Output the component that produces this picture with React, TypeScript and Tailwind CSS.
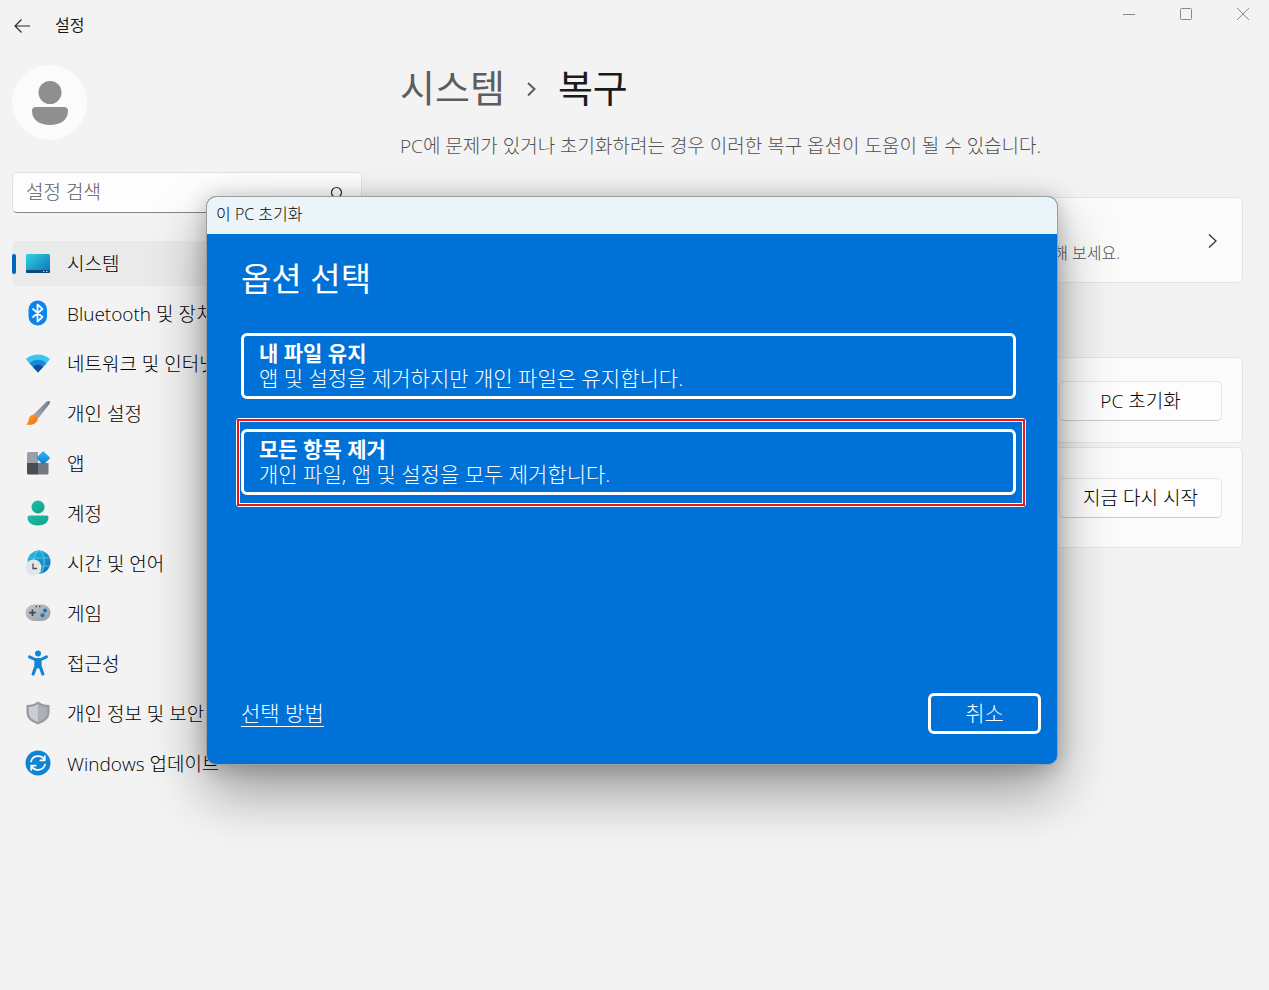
import React, { useState } from 'react';

type NavItem = { id: string; label: string; icon: React.ReactNode };

const SystemIcon = () => (
  <svg width="26" height="26" viewBox="0 0 26 26">
    <defs>
      <linearGradient id="sys" x1="0" y1="0" x2="1" y2="1">
        <stop offset="0" stopColor="#32d3dd" />
        <stop offset="1" stopColor="#0b6ebd" />
      </linearGradient>
    </defs>
    <rect x="1" y="4" width="24" height="19" rx="1.500" fill="url(#sys)" />
    <path d="M1 20h24v1.500a1.500 1.500 0 0 1-1.500 1.500h-21A1.500 1.500 0 0 1 1 21.500z" fill="#0c4a78" />
    <path d="M18 21h1.500v1H18zM21 21h1.500v1H21z" fill="#9fd8f5" />
  </svg>
);

const BluetoothIcon = () => (
  <svg width="26" height="26" viewBox="0 0 26 26">
    <rect x="3.500" y="0.500" width="18.500" height="25" rx="9" fill="#0a84f0" />
    <path d="M8 9l9.500 8-5 4.500v-17l5 4.500L8 17" fill="none" stroke="#fff" strokeWidth="1.700" strokeLinejoin="round" strokeLinecap="round" />
  </svg>
);

const NetworkIcon = () => (
  <svg width="26" height="26" viewBox="0 0 26 26">
    <path d="M0.800 9.200C7.500 3 18 3 25 9.200L13 22.500z" fill="#39c6f1" />
    <path d="M4.500 13.200c5-4.600 12-4.600 17 0L13 22.500z" fill="#1889d6" />
    <path d="M8 17c3-2.900 7-2.900 10 0l-5 5.500z" fill="#0c529c" />
  </svg>
);

const BrushIcon = () => (
  <svg width="26" height="26" viewBox="0 0 26 26">
    <defs>
      <linearGradient id="brush" x1="1" y1="0" x2="0" y2="1">
        <stop offset="0" stopColor="#707a84" />
        <stop offset="1" stopColor="#a7aeb5" />
      </linearGradient>
      <linearGradient id="paint" x1="0" y1="0" x2="1" y2="1">
        <stop offset="0" stopColor="#ffa638" />
        <stop offset="1" stopColor="#ee6a0c" />
      </linearGradient>
    </defs>
    <path d="M8.500 14.500L21.500 1.700c1.500-1.500 4.600-1 3.200 2L13.500 18z" fill="url(#brush)" />
    <path d="M7.500 14.800c4-1.300 7 2.500 4.600 6.200C10 25 4.500 25.300 1 24.500c1.900-1 2-2.200 2.500-4.500.500-2.800 1.800-4.500 4-5.200z" fill="url(#paint)" />
  </svg>
);

const AppsIcon = () => (
  <svg width="26" height="26" viewBox="0 0 26 26">
    <defs>
      <linearGradient id="apps" x1="0" y1="0" x2="1" y2="1">
        <stop offset="0" stopColor="#37b6f2" />
        <stop offset="1" stopColor="#0b78d4" />
      </linearGradient>
    </defs>
    <path d="M3.500 2H13v11.500H2V3.500A1.500 1.500 0 0 1 3.500 2z" fill="#9aa0a7" />
    <path d="M2 13h11v11.500H3.500A1.500 1.500 0 0 1 2 23z" fill="#484d52" />
    <path d="M13 13h10.500v10a1.500 1.500 0 0 1-1.500 1.500h-9z" fill="#72787f" />
    <rect x="13.200" y="3" width="10" height="10" rx="1" transform="rotate(45 18.200 8)" fill="url(#apps)" />
  </svg>
);

const AccountIcon = () => (
  <svg width="26" height="26" viewBox="0 0 26 26">
    <defs>
      <linearGradient id="acct" x1="0" y1="0" x2="1" y2="1">
        <stop offset="0" stopColor="#23bda7" />
        <stop offset="1" stopColor="#0e9f89" />
      </linearGradient>
    </defs>
    <circle cx="13" cy="7" r="6.500" fill="url(#acct)" />
    <path d="M4.500 15.500h17a2 2 0 0 1 2 2c0 5-4.500 8-10.500 8s-10.500-3-10.500-8a2 2 0 0 1 2-2z" fill="url(#acct)" />
  </svg>
);

const TimeIcon = () => (
  <svg width="26" height="26" viewBox="0 0 26 26">
    <defs>
      <linearGradient id="globe" x1="0" y1="0" x2="1" y2="1">
        <stop offset="0" stopColor="#2cc0dc" />
        <stop offset="1" stopColor="#0a68bd" />
      </linearGradient>
    </defs>
    <circle cx="14" cy="12" r="11.500" fill="url(#globe)" />
    <g fill="none" stroke="#4fc4e6" strokeWidth="1.200">
      <ellipse cx="14" cy="12" rx="5.200" ry="11.300" />
      <path d="M4 8h20.500M3.500 16h21" />
    </g>
    <circle cx="8.500" cy="17.500" r="8" fill="#e3e6e9" />
    <path d="M8 13.500v5h4" fill="none" stroke="#4a4f55" strokeWidth="1.300" />
  </svg>
);

const GameIcon = () => (
  <svg width="26" height="26" viewBox="0 0 26 26">
    <defs>
      <linearGradient id="pad" x1="0" y1="0" x2="1" y2="1">
        <stop offset="0" stopColor="#c3c8cd" />
        <stop offset="1" stopColor="#969da4" />
      </linearGradient>
    </defs>
    <rect x="0.500" y="4.500" width="25" height="16.500" rx="8.200" fill="url(#pad)" />
    <path d="M7.500 9.500v6.500M4.200 12.700h6.600" stroke="#41464b" strokeWidth="1.700" fill="none" />
    <path d="M10.500 6.500h1.500M14 6.500h1.500" stroke="#41464b" strokeWidth="1.300" />
    <circle cx="20" cy="10.500" r="2" fill="#0f76c9" />
    <circle cx="17.500" cy="15.300" r="2" fill="#0f76c9" />
  </svg>
);

const AccessIcon = () => (
  <svg width="26" height="26" viewBox="0 0 26 26">
    <g fill="none" stroke="#1286d3" strokeLinecap="round" strokeLinejoin="round">
      <path d="M4.500 6.800L10 9.500h6l5.500-2.700" strokeWidth="3" />
      <path d="M11 11v5L8.200 24M15 11v5l2.800 8" strokeWidth="3.200" />
      <path d="M13 11v5" strokeWidth="5" />
    </g>
    <circle cx="13" cy="3.500" r="3" fill="#1286d3" />
  </svg>
);

const ShieldIcon = () => (
  <svg width="26" height="26" viewBox="0 0 26 26">
    <path d="M13 1.500c3 2.500 7 3.500 11.500 3.500v7c0 6.500-4 9.500-11.500 12.500C5.500 21.500 1.500 18.500 1.500 12V5C6 5 10 4 13 1.500z" fill="#949ba1" />
    <path d="M13 4v18C6.500 19.500 3.700 17 3.700 12V7C7.500 6.800 10.500 5.800 13 4z" fill="#c9cdd1" />
    <path d="M13 4v18c6.500-2.500 9.300-5 9.300-10V7C18.500 6.800 15.500 5.800 13 4z" fill="#aab0b6" />
  </svg>
);

const UpdateIcon = () => (
  <svg width="26" height="26" viewBox="0 0 26 26">
    <circle cx="13" cy="13" r="12.500" fill="#0f84d3" />
    <g fill="none" stroke="#fff" strokeWidth="1.700" strokeLinecap="round" strokeLinejoin="round">
      <path d="M6 11.500a7.300 7.300 0 0 1 13.500-1.500M19.800 6v4.300h-4.500" />
      <path d="M20 14.500A7.300 7.300 0 0 1 6.500 16M6.200 20v-4.300h4.500" />
    </g>
  </svg>
);

const navItems: NavItem[] = [
  { id: 'system', label: '시스템', icon: <SystemIcon /> },
  { id: 'bluetooth', label: 'Bluetooth 및 장치', icon: <BluetoothIcon /> },
  { id: 'network', label: '네트워크 및 인터넷', icon: <NetworkIcon /> },
  { id: 'personal', label: '개인 설정', icon: <BrushIcon /> },
  { id: 'apps', label: '앱', icon: <AppsIcon /> },
  { id: 'accounts', label: '계정', icon: <AccountIcon /> },
  { id: 'time', label: '시간 및 언어', icon: <TimeIcon /> },
  { id: 'gaming', label: '게임', icon: <GameIcon /> },
  { id: 'access', label: '접근성', icon: <AccessIcon /> },
  { id: 'privacy', label: '개인 정보 및 보안', icon: <ShieldIcon /> },
  { id: 'update', label: 'Windows 업데이트', icon: <UpdateIcon /> },
];

const TitleBar = () => (
  <header className="flex h-[50px] items-start justify-between">
    <div className="flex h-[50px] items-center pl-3">
      <button aria-label="뒤로" className="flex w-5 justify-center pt-px">
        <svg width="18" height="16" viewBox="0 0 18 16" fill="none" stroke="#2b2b2b" strokeWidth="1.200">
          <path d="M8.500 1.500L2 8l6.500 6.500M2 8h15" />
        </svg>
      </button>
      <span className="pl-[23px] text-[16px] leading-6 font-normal text-[#1a1a1a]">설정</span>
    </div>
    <div className="flex h-7 text-[#8a8a8a]">
      <button aria-label="최소화" className="flex w-[57px] items-center justify-center pl-1">
        <svg width="12" height="12" viewBox="0 0 12 12" stroke="currentColor"><path d="M0 6.500h12" /></svg>
      </button>
      <button aria-label="최대화" className="flex w-[57px] items-center justify-center pl-1">
        <svg width="12" height="12" viewBox="0 0 12 12" fill="none" stroke="currentColor"><rect x="0.500" y="0.500" width="11" height="11" rx="1" /></svg>
      </button>
      <button aria-label="닫기" className="flex w-[57px] items-center justify-center pl-1">
        <svg width="12" height="12" viewBox="0 0 12 12" stroke="currentColor"><path d="M0 0l12 12M12 0L0 12" /></svg>
      </button>
    </div>
  </header>
);

const Sidebar = () => {
  const [active, setActive] = useState('system');
  const [query, setQuery] = useState('');

  return (
    <aside className="w-[350px] shrink-0 pt-[15px]">
      <div className="flex size-[75px] items-center justify-center rounded-full bg-[#fbfbfb]">
        <svg width="36" height="44" viewBox="0 0 36 44" fill="#8f8f8f">
          <circle cx="18" cy="11.500" r="11.500" />
          <path d="M4 26h28a4 4 0 0 1 4 4c0 9-8 14-18 14S0 39 0 30a4 4 0 0 1 4-4z" />
        </svg>
      </div>

      <label className="mt-8 flex h-[41px] items-center rounded-[5px] border border-[#e3e3e3] border-b-[#868686] bg-[#fdfdfd] pr-[17px] pl-[13px]">
        <span className="sr-only">설정 검색</span>
        <input
          type="text"
          value={query}
          onChange={(e) => setQuery(e.target.value)}
          placeholder="설정 검색"
          className="h-full min-w-0 flex-1 bg-transparent pb-0.5 text-[19px] leading-9 outline-none placeholder:text-[#5c5c5c]"
        />
        <svg width="14" height="14" viewBox="0 0 14 14" fill="none" stroke="#2b2b2b" strokeWidth="1.200">
          <circle cx="6.500" cy="6.500" r="5" />
          <path d="M10 10l3.500 3.500" />
        </svg>
      </label>

      <nav className="mt-7 flex flex-col gap-[5px]">
        {navItems.map((item) => (
          <a
            key={item.id}
            href={`#${item.id}`}
            onClick={() => setActive(item.id)}
            className={`flex h-[45px] items-center rounded-[5px] ${item.id === active ? 'bg-[#eaeaea]' : ''}`}
          >
            <span className={`h-5 w-1 rounded-full ${item.id === active ? 'bg-[#0067c0]' : ''}`} />
            <span className="mb-px ml-[9px] shrink-0">{item.icon}</span>
            <span className="ml-4 text-[19px] leading-7 whitespace-nowrap text-black">{item.label}</span>
          </a>
        ))}
      </nav>
    </aside>
  );
};

const Recovery = () => (
  <main className="min-w-0 flex-1 pt-[13px]">
    <h1 className="flex h-12 items-center text-[38px] leading-[48px] font-normal">
      <a href="#system" className="text-[#5d5d5d]">시스템</a>
      <svg className="mx-[21px] mt-1" width="11" height="16" viewBox="0 0 11 16" fill="none" stroke="#5d5d5d" strokeWidth="2">
        <path d="M2 2l6.500 6L2 14.500" />
      </svg>
      <span className="text-[#1a1a1a]">복구</span>
    </h1>
    <p className="mt-[21px] text-[19px] leading-7 whitespace-nowrap text-[#505050]">
      PC에 문제가 있거나 초기화하려는 경우 이러한 복구 옵션이 도움이 될 수 있습니다.
    </p>

    <a href="#troubleshoot" className="mt-[37px] flex h-[86px] items-center justify-end rounded-[5px] border border-[#e5e5e5] bg-[#fbfbfb] pt-0.5 pr-6">
      <span className="pt-6 text-[16px] leading-6 text-[#505050]">해결해 보세요.</span>
      <svg className="ml-[88px]" width="10" height="16" viewBox="0 0 10 16" fill="none" stroke="#333" strokeWidth="1.300">
        <path d="M1 1.500L8 8l-7 6.500" />
      </svg>
    </a>

    <div className="mt-[74px] flex h-[86px] items-center justify-end rounded-[5px] border border-[#e5e5e5] bg-[#fbfbfb] pt-0.5 pr-5">
      <button className="h-10 w-[163px] rounded-[5px] border border-[#e5e5e5] border-b-[#cccccc] bg-[#fdfdfd] text-[19px] leading-7 text-black">PC 초기화</button>
    </div>
    <div className="mt-1 flex h-[101px] items-center justify-end rounded-[5px] border border-[#e5e5e5] bg-[#fbfbfb] pr-5">
      <button className="h-10 w-[163px] rounded-[5px] border border-[#e5e5e5] border-b-[#cccccc] bg-[#fdfdfd] text-[19px] leading-7 text-black">지금 다시 시작</button>
    </div>
  </main>
);

const OptionButton = ({ title, detail }: { title: string; detail: string }) => (
  <button className="block h-[66px] w-full rounded-[6px] border-3 border-white px-[15px] text-left text-[21px] leading-[25px] text-white">
    <span className="block font-bold">{title}</span>
    <span className="block">{detail}</span>
  </button>
);

const ResetDialog = () => (
  <div className="absolute inset-0 flex items-start justify-center pt-[196px] pr-[5px]">
    <section
      role="dialog"
      aria-labelledby="reset-title"
      className="w-full max-w-[852px] overflow-hidden rounded-[10px] border border-[#9a9fa3] bg-[#0071d7] shadow-[0_28px_56px_rgba(0,0,0,0.36),0_2px_21px_rgba(0,0,0,0.22)]"
    >
      <div id="reset-title" className="flex h-[37px] items-center bg-[#ebf4f9] pb-1 pl-[9px] text-[16px] leading-6 text-black">
        이 PC 초기화
      </div>
      <div className="flex min-h-[530px] flex-col pt-[21px] pr-4 pb-[30px] pl-[34px] text-white">
        <h2 className="text-[33px] leading-[48px] font-normal">옵션 선택</h2>
        <div className="mt-[30px] flex flex-col gap-[30px] pr-[25px]">
          <OptionButton title="내 파일 유지" detail="앱 및 설정을 제거하지만 개인 파일은 유지합니다." />
          <div className="relative">
            <OptionButton title="모든 항목 제거" detail="개인 파일, 앱 및 설정을 모두 제거합니다." />
            <div className="pointer-events-none absolute -top-[11px] -right-[10px] -bottom-3 -left-[5px] rounded-[3px] border border-white">
              <div className="h-full border-2 border-[#f01414]">
                <div className="h-full border border-white" />
              </div>
            </div>
          </div>
        </div>
        <div className="mt-auto flex items-center justify-between">
          <a href="#help" className="border-b border-white text-[21px] leading-[25px]">선택 방법</a>
          <button className="h-[41px] w-[113px] rounded-[6px] border-3 border-white text-[21px] leading-[25px]">취소</button>
        </div>
      </div>
    </section>
  </div>
);

export default function App() {
  return (
    <div className="relative min-h-screen overflow-hidden bg-[#f3f3f3] font-['Open_Sans','Noto_Sans_CJK_KR',sans-serif] font-light">
      <TitleBar />
      <div className="flex gap-[38px] pr-[26px] pl-3">
        <Sidebar />
        <Recovery />
      </div>
      <ResetDialog />
    </div>
  );
}
